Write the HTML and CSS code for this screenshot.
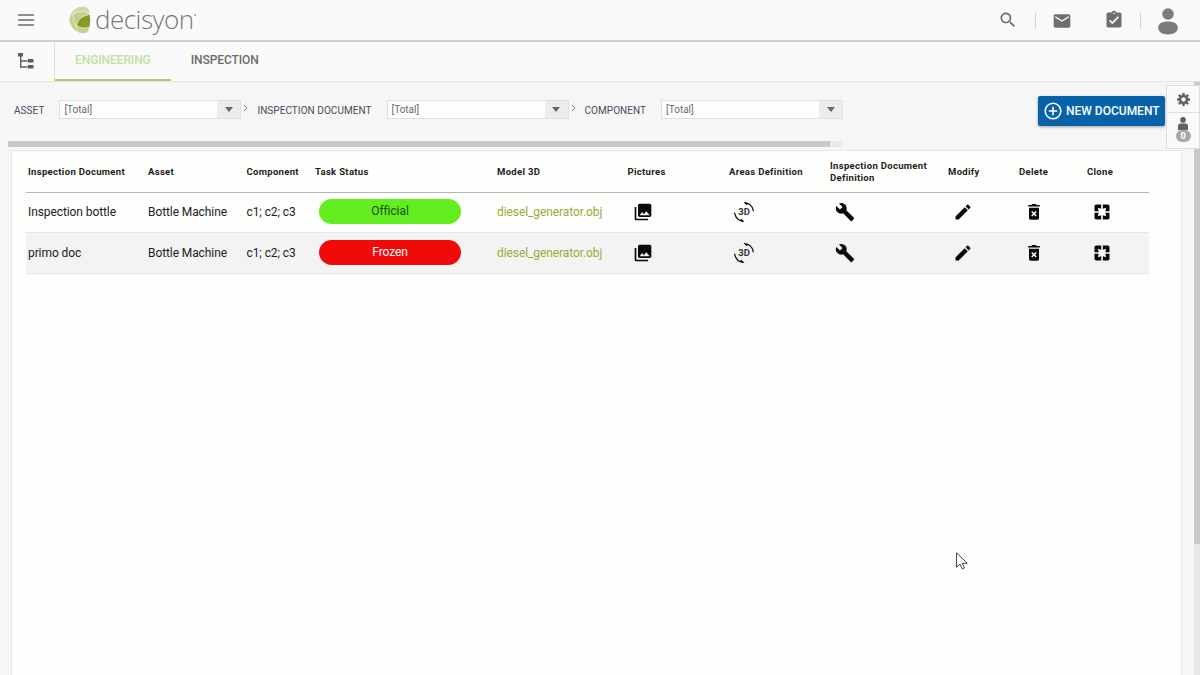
FILE: index.html
```html
<!DOCTYPE html>
<html lang="en">
<head>
  <meta charset="UTF-8" />
  <meta name="viewport" content="width=device-width, initial-scale=1.0"/>
  <title>Decisyon - Engineering</title>
  <link rel="stylesheet" href="styles.css">
</head>
<body>
  <!-- Shared icons -->
  <svg class="sprite" aria-hidden="true">
    <symbol id="i-pictures" viewBox="0 0 24 24"><path d="M22 16V4c0-1.100-.9-2-2-2H8c-1.100 0-2 .9-2 2v12c0 1.100.9 2 2 2h12c1.100 0 2-.9 2-2zm-11-4l2.030 2.710L16 11l4 5H8l3-4zM2 6v14c0 1.100.9 2 2 2h14v-2H4V6H2z"/></symbol>
    <symbol id="i-rotate" viewBox="0 0 24 24"><path d="M7.520 21.480C4.250 19.940 1.910 16.760 1.550 13H.05C.56 19.160 5.710 24 12 24l.66-.03-3.810-3.810-1.330 1.320zM16.480 2.520c3.270 1.550 5.610 4.720 5.970 8.480h1.500C23.440 4.840 18.290 0 12 0l-.66.03 3.810 3.810 1.330-1.320z"/></symbol>
    <symbol id="i-wrench" viewBox="0 0 24 24"><path d="M22.700 19l-9.100-9.100c.9-2.300.4-5-1.500-6.900-2-2-5-2.400-7.400-1.300L9 6 6 9 1.600 4.700C.4 7.100.9 10.100 2.900 12.100c1.900 1.900 4.600 2.400 6.900 1.500l9.100 9.100c.4.4 1 .4 1.400 0l2.300-2.300c.5-.4.5-1.100.1-1.400z"/></symbol>
    <symbol id="i-edit" viewBox="0 0 24 24"><path d="M3 17.250V21h3.750L17.810 9.940l-3.750-3.750L3 17.250zM20.710 7.040c.39-.39.39-1.020 0-1.410l-2.340-2.340c-.39-.39-1.020-.39-1.410 0l-1.830 1.830 3.750 3.750 1.830-1.830z"/></symbol>
    <symbol id="i-delete" viewBox="0 0 24 24"><path d="M5 3.500h3.800l1-1.200h4.400l1 1.200H19V5.500H5zM6 7h12v12.200c0 1.100-.9 2-2 2H8c-1.100 0-2-.9-2-2z"/><path class="cross" d="M9.300 11.300l5.400 5.400M14.700 11.300l-5.400 5.400"/></symbol>
    <symbol id="i-clone" viewBox="0 0 24 24"><path d="M3 5v6h5L7 7l4 1V3H5c-1.100 0-2 .9-2 2zm5 8H3v6c0 1.100.9 2 2 2h6v-5l-4 1 1-4zm9 4l-4-1v5h6c1.100 0 2-.9 2-2v-6h-5l1 4zm2-14h-6v5l4-1-1 4h5V5c0-1.100-.9-2-2-2z"/></symbol>
  </svg>

  <!-- Top bar -->
  <header class="topbar">
    <svg class="menu" viewBox="0 0 16 12"><path d="M0 1h16M0 6h16M0 11h16"/></svg>
    <div class="logo">
      <svg class="logo-mark" viewBox="0 0 22 28">
        <path fill="#c3d08e" d="M10 1.200C14 .2 18 .5 19.500 3.500c1.800 4 2 15-.3 21.500C17 28.500 9 27.500 5.500 24 2 20 0 16 .5 12 1.500 7 5 2.600 10 1.200z"/>
        <path fill="#cfdaa6" d="M10 1.200C14 .2 18 .5 19.500 3.500l1 4C14 4 6 5 1 11 2 6.500 5 2.600 10 1.200z"/>
        <path fill="#8a9a27" d="M20.700 8.800c.9 4 .6 9-.7 12.600-4.200 1-8.900.2-12.200-1.800C8 14.500 12.500 9.800 20.700 8.800z"/>
        <path fill="none" stroke="#eef2dc" stroke-width="0.7" d="M20.700 8.500C13 9.500 8 14 7.500 20c-.2 2.500.5 4.500 2 6.500M7.500 20C4 17 3 10 5.500 4.500M8 20c3.500 2.200 8 2.700 12 1.500M1 11C5 6 12 4 20.500 7.500"/>
      </svg>
      <span class="logo-text">decisyon</span><span class="logo-dot"></span>
    </div>
    <div class="top-actions">
      <svg class="ic-search" viewBox="0 0 24 24"><path d="M15.500 14h-.79l-.28-.27C15.410 12.590 16 11.110 16 9.500 16 5.910 13.090 3 9.500 3S3 5.910 3 9.500 5.910 16 9.500 16c1.610 0 3.090-.59 4.230-1.570l.27.28v.79l5 4.990L20.490 19l-4.990-5zm-6 0C7.010 14 5 11.990 5 9.500S7.010 5 9.500 5 14 7.010 14 9.500 11.990 14 9.500 14z"/></svg>
      <span class="divider"></span>
      <svg class="ic-mail" viewBox="0 0 24 24"><path d="M20 4H4c-1.100 0-2 .9-2 2v12c0 1.100.9 2 2 2h16c1.100 0 2-.9 2-2V6c0-1.100-.9-2-2-2zm0 4l-8 5-8-5V6l8 5 8-5v2z"/></svg>
      <svg class="ic-task" viewBox="0 0 24 24"><path d="M19 3h-4.180C14.400 1.840 13.300 1 12 1c-1.300 0-2.400.84-2.820 2H5c-1.100 0-2 .9-2 2v14c0 1.100.9 2 2 2h14c1.100 0 2-.9 2-2V5c0-1.100-.9-2-2-2zm-7 0c.55 0 1 .45 1 1s-.45 1-1 1-1-.45-1-1 .45-1 1-1zm-2 14l-4-4 1.410-1.410L10 14.170l6.590-6.590L18 9l-8 8z"/></svg>
      <span class="divider"></span>
      <svg class="ic-user" viewBox="0 0 20 27"><circle cx="10" cy="6" r="5.800"/><path d="M10 13.500c6 0 9.800 2 9.800 6.300 0 4.200-4.300 6.700-9.800 6.700S.2 24 .2 19.800c0-4.300 3.800-6.300 9.800-6.300z"/></svg>
    </div>
  </header>

  <!-- Tabs -->
  <nav class="tabs">
    <div class="tree">
      <svg viewBox="0 0 16 16"><path d="M0 0h5v3.500H0zM10 6h5.500v3.600H10zM10 12h5.500v3.600H10z"/><path class="line" d="M2.700 3v11h7M2.700 8h7"/></svg>
    </div>
    <a class="tab active">ENGINEERING</a>
    <a class="tab">INSPECTION</a>
  </nav>

  <div class="page">
    <main class="content">
      <div class="toolbar">
        <div class="filters">
          <label>ASSET</label>
          <div class="select"><span>[Total]</span><i></i></div>
          <svg class="chevron" viewBox="0 0 5 8"><path d="M1 1l3 3-3 3"/></svg>
          <label>INSPECTION DOCUMENT</label>
          <div class="select"><span>[Total]</span><i></i></div>
          <svg class="chevron" viewBox="0 0 5 8"><path d="M1 1l3 3-3 3"/></svg>
          <label>COMPONENT</label>
          <div class="select"><span>[Total]</span><i></i></div>
        </div>
        <button class="new-doc">
          <svg viewBox="0 0 18 18"><circle cx="9" cy="9" r="7.800"/><path d="M9 4.800v8.400M4.800 9h8.400"/></svg>
          NEW DOCUMENT
        </button>
      </div>
      <div class="hscroll"><div class="hthumb"></div></div>

      <section class="panel">
        <table>
          <colgroup>
            <col class="c-doc"><col class="c-asset"><col class="c-comp"><col class="c-status"><col class="c-model"><col class="c-pic"><col class="c-area"><col class="c-def"><col class="c-mod"><col class="c-del"><col>
          </colgroup>
          <thead>
            <tr>
              <th>Inspection Document</th><th>Asset</th><th>Component</th><th>Task Status</th><th>Model 3D</th><th>Pictures</th><th>Areas Definition</th><th>Inspection Document Definition</th><th>Modify</th><th>Delete</th><th>Clone</th>
            </tr>
          </thead>
          <tbody>
            <tr>
              <td>Inspection bottle</td><td>Bottle Machine</td><td>c1; c2; c3</td>
              <td><span class="pill official">Official</span></td>
              <td><a class="model">diesel_generator.obj</a></td>
              <td><svg class="icon"><use href="#i-pictures"/></svg></td>
              <td><span class="rotate"><svg class="icon"><use href="#i-rotate"/></svg><b>3D</b></span></td>
              <td><svg class="icon"><use href="#i-wrench"/></svg></td>
              <td><svg class="icon"><use href="#i-edit"/></svg></td>
              <td><svg class="icon"><use href="#i-delete"/></svg></td>
              <td><svg class="icon"><use href="#i-clone"/></svg></td>
            </tr>
            <tr>
              <td>primo doc</td><td>Bottle Machine</td><td>c1; c2; c3</td>
              <td><span class="pill frozen">Frozen</span></td>
              <td><a class="model">diesel_generator.obj</a></td>
              <td><svg class="icon"><use href="#i-pictures"/></svg></td>
              <td><span class="rotate"><svg class="icon"><use href="#i-rotate"/></svg><b>3D</b></span></td>
              <td><svg class="icon"><use href="#i-wrench"/></svg></td>
              <td><svg class="icon"><use href="#i-edit"/></svg></td>
              <td><svg class="icon"><use href="#i-delete"/></svg></td>
              <td><svg class="icon"><use href="#i-clone"/></svg></td>
            </tr>
          </tbody>
        </table>
      </section>
    </main>
    <div class="vscroll"><div class="vthumb"></div></div>

    <!-- Floating side tools -->
    <aside class="side-tools">
      <div class="tool-gear">
        <svg viewBox="0 0 24 24"><g class="teeth"><path d="M12 0v24M0 12h24M3.500 3.500l17 17M20.500 3.500l-17 17"/></g><circle cx="12" cy="12" r="8.500"/><circle class="hole" cx="12" cy="12" r="4"/></svg>
      </div>
      <div class="tool-users">
        <svg viewBox="0 0 10 13"><circle cx="5" cy="2.900" r="2.800"/><path d="M2.500 6.500h5C9 6.500 10 7.500 10 9v4H0V9c0-1.500 1-2.500 2.500-2.500z"/></svg>
        <span>0</span>
      </div>
    </aside>
  </div>

  <svg class="cursor" viewBox="0 0 13 18"><path d="M.5 .8v14.500l3.500-3.200 2.200 4.800 2.300-1-2.200-4.600h5z"/></svg>
</body>
</html>
```
FILE: styles.css
```css
* {
  box-sizing: border-box;
}

html, body {
  margin: 0;
  padding: 0;
  height: 100%;
}

body {
  display: flex;
  flex-direction: column;
  overflow: hidden;
  background: #f6f6f6;
  font-family: Roboto, sans-serif;
  color: #222;
}

svg {
  display: block;
}

.sprite {
  display: none;
}

/* Top bar */
.topbar {
  flex: none;
  display: flex;
  align-items: center;
  height: 42px;
  padding: 0 22px 0 18px;
  background: #fafafa;
  border-bottom: 2px solid #cfcfcf;
}

.menu {
  width: 16px;
  height: 12px;
  stroke: #6b6b6b;
  stroke-width: 1.5;
}

.logo {
  display: flex;
  align-items: center;
  margin-left: 35px;
}

.logo-mark {
  width: 22px;
  height: 28px;
}

.logo-text {
  margin-left: 4px;
  margin-top: -3px;
  font-family: "Open Sans", sans-serif;
  font-weight: 300;
  font-size: 26px;
  line-height: 30px;
  letter-spacing: -0.5px;
  color: #777;
}

.logo-dot {
  width: 2px;
  height: 2px;
  margin-top: -10px;
  border-radius: 50%;
  background: #999;
}

.top-actions {
  display: flex;
  align-items: center;
  margin-left: auto;
  fill: #6f6f6f;
}

.ic-search {
  width: 20px;
  height: 20px;
  margin-right: 17px;
}

.divider {
  width: 1px;
  height: 17px;
  background: #d4d4d4;
}

.ic-mail {
  width: 20px;
  height: 20px;
  margin: 1px 32px 0 16px;
}

.ic-task {
  width: 20px;
  height: 20px;
  margin-right: 16px;
}

.ic-user {
  width: 20px;
  height: 27px;
  margin: 2px 0 0 17px;
  fill: #7b7b7b;
}

/* Tabs */
.tabs {
  flex: none;
  display: flex;
  height: 40px;
  background: #fafafa;
  border-bottom: 1px solid #e2e2e2;
}

.tree {
  width: 55px;
  padding: 11px 0 0 18px;
  border-right: 1px solid #dedede;
}

.tree svg {
  width: 16px;
  height: 16px;
  fill: #5e5e5e;
}

.tree .line {
  fill: none;
  stroke: #5e5e5e;
  stroke-width: 1.4;
}

.tab {
  height: 39px;
  padding: 0 20px;
  font-size: 12px;
  line-height: 37px;
  font-weight: 500;
  letter-spacing: -0.08px;
  color: #6a6a6a;
}

.tab.active {
  color: #c0e2a0;
  border-bottom: 2px solid #a3d173;
}

/* Content */
.page {
  flex: 1;
  display: flex;
  min-height: 0;
  position: relative;
}

.content {
  flex: 1;
  display: flex;
  flex-direction: column;
  padding: 0 12px 0 8px;
}

.toolbar {
  display: flex;
  height: 59px;
}

.filters {
  display: flex;
  padding: 18px 0 0 6px;
}

.filters label {
  font-size: 10px;
  line-height: 21px;
  letter-spacing: 0.05px;
  color: #454c5a;
  white-space: nowrap;
}

.select {
  display: flex;
  width: 182px;
  height: 19px;
  margin-left: 15px;
  border: 1px solid #e0e0e0;
  background: #fefefe;
}

.select span {
  flex: 1;
  padding-left: 4px;
  font-size: 10px;
  line-height: 17px;
  color: #6a6a6a;
}

.select i {
  display: flex;
  align-items: center;
  justify-content: center;
  width: 23px;
  background: #ececec;
}

.select i::after {
  content: "";
  border: 4px solid transparent;
  border-top: 5px solid #666;
  border-bottom: 0;
}

.chevron {
  width: 5px;
  height: 8px;
  margin: 4px 9px 0 2px;
  fill: none;
  stroke: #888;
}

.new-doc {
  display: flex;
  align-items: center;
  width: 127px;
  height: 30px;
  margin: 14px 17px 0 auto;
  padding: 0 0 0 6px;
  border: none;
  border-radius: 2px;
  background: #0763a9;
  box-shadow: 0 1px 3px rgba(0, 0, 0, 0.35);
  color: #fff;
  font-family: Roboto, sans-serif;
  font-size: 12px;
  font-weight: 500;
  white-space: nowrap;
}

.new-doc svg {
  flex: none;
  width: 18px;
  height: 18px;
  margin-right: 4px;
  fill: none;
  stroke: #fff;
  stroke-width: 1.6;
}

.hscroll {
  width: 835px;
  height: 6px;
  background: #e9e9e9;
}

.hthumb {
  width: 822px;
  height: 6px;
  background: #c9c9c9;
}

.panel {
  flex: 1;
  width: 1171px;
  margin: 3px 0 0 3px;
  padding-left: 14px;
  background: #fefefd;
  border: 1px solid #e6e6e6;
  border-bottom: none;
}

/* Documents table */
table {
  width: 1123px;
  table-layout: fixed;
  border-collapse: collapse;
}

.c-doc { width: 120px; }
.c-asset { width: 98.5px; }
.c-comp { width: 68.5px; }
.c-status { width: 182px; }
.c-model { width: 130.5px; }
.c-pic { width: 101.5px; }
.c-area { width: 101px; }
.c-def { width: 118px; }
.c-mod { width: 71px; }
.c-del { width: 68px; }

th, td {
  padding: 0 0 0 2px;
  text-align: left;
  vertical-align: middle;
}

th {
  height: 41px;
  padding-top: 2px;
  font-size: 9.5px;
  line-height: 12px;
  font-weight: 700;
  letter-spacing: 0.32px;
  color: #1c1c1c;
  border-bottom: 1px solid #b5b5b5;
}

td {
  height: 40.5px;
  font-size: 12px;
  letter-spacing: -0.09px;
  white-space: nowrap;
  border-bottom: 1px solid #e4e4e4;
}

tbody tr:nth-child(2) {
  background: #f3f3f3;
}

.pill {
  display: block;
  width: 142px;
  height: 25px;
  margin: -1px 0 0 4px;
  border-radius: 13px;
  line-height: 25px;
  text-align: center;
}

.official {
  background: #62ee1e;
  color: #1f4a12;
}

.frozen {
  background: #f20a0a;
  color: #fff;
}

.model {
  color: #9bab33;
}

.icon {
  width: 20px;
  height: 20px;
  margin-left: 5px;
  fill: #0a0a0a;
}

.cross {
  stroke: #fff;
  stroke-width: 1.8;
}

.rotate {
  display: block;
  position: relative;
}

.rotate b {
  position: absolute;
  left: 5px;
  top: 0;
  width: 20px;
  text-align: center;
  font-size: 9.5px;
  line-height: 20px;
  color: #333;
}

/* Page scrollbar */
.vscroll {
  width: 6px;
  background: #e8e8e8;
}

.vthumb {
  height: 462px;
  background: #c9c9c9;
}

.side-tools {
  position: absolute;
  top: 3px;
  right: 0;
  width: 34px;
  height: 64px;
  background: #fafafa;
  border: 1px solid #dedede;
  fill: #616161;
}

.tool-gear {
  display: flex;
  align-items: center;
  justify-content: center;
  height: 27px;
  border-bottom: 1px solid #dedede;
}

.tool-gear svg {
  width: 13px;
  height: 13px;
}

.teeth {
  stroke: #616161;
  stroke-width: 4.5;
}

.hole {
  fill: #fafafa;
}

.tool-users {
  display: flex;
  flex-direction: column;
  align-items: center;
  padding-top: 4px;
}

.tool-users svg {
  width: 10px;
  height: 13px;
}

.tool-users span {
  width: 15px;
  height: 12px;
  border-radius: 6px;
  background: #a8a8a8;
  color: #fff;
  font-size: 9px;
  font-weight: 700;
  line-height: 12px;
  text-align: center;
}

.cursor {
  position: absolute;
  left: 956px;
  top: 552px;
  width: 13px;
  height: 18px;
  fill: #fff;
  stroke: #444;
}
```
